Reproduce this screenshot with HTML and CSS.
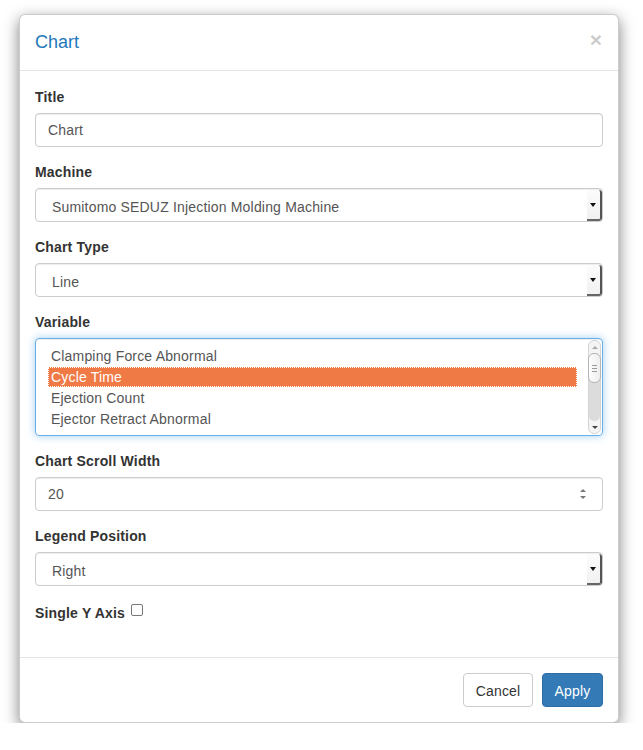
FILE: index.html
```html
<!DOCTYPE html>
<html>
<head>
<meta charset="utf-8">
<link rel="stylesheet" href="styles.css">
</head>
<body>
<div class="modal">
  <div class="modal-header">
    <h4 class="modal-title">Chart</h4>
    <span class="close">×</span>
  </div>
  <div class="modal-body">
    <div class="form-group">
      <label class="lbl">Title</label>
      <div class="control input">Chart</div>
    </div>
    <div class="form-group">
      <label class="lbl">Machine</label>
      <div class="control select"><span class="sel-text">Sumitomo SEDUZ Injection Molding Machine</span><span class="sel-btn"><span class="tri"></span></span></div>
    </div>
    <div class="form-group">
      <label class="lbl">Chart Type</label>
      <div class="control select"><span class="sel-text">Line</span><span class="sel-btn"><span class="tri"></span></span></div>
    </div>
    <div class="form-group">
      <label class="lbl">Variable</label>
      <div class="listbox">
        <div class="options">
          <div class="opt">Clamping Force Abnormal</div>
          <div class="opt selected">Cycle Time</div>
          <div class="opt">Ejection Count</div>
          <div class="opt">Ejector Retract Abnormal</div>
        </div>
        <div class="scrollbar">
          <div class="sb-arrow up"></div>
          <div class="sb-track">
            <div class="sb-thumb"><span></span><span></span><span></span></div>
          </div>
          <div class="sb-arrow down"></div>
        </div>
      </div>
    </div>
    <div class="form-group">
      <label class="lbl">Chart Scroll Width</label>
      <div class="control input number"><span>20</span><span class="spin"><span class="sp-up"></span><span class="sp-down"></span></span></div>
    </div>
    <div class="form-group">
      <label class="lbl">Legend Position</label>
      <div class="control select"><span class="sel-text">Right</span><span class="sel-btn"><span class="tri"></span></span></div>
    </div>
    <div class="form-group last">
      <label class="lbl inline">Single Y Axis</label><span class="checkbox"></span>
    </div>
  </div>
  <div class="modal-footer">
    <button class="btn btn-default">Cancel</button>
    <button class="btn btn-primary">Apply</button>
  </div>
</div>
</body>
</html>
```

FILE: styles.css
```css
html, body {
  margin: 0;
  padding: 0;
  background: #fff;
}
body {
  font-family: "Liberation Sans", Arial, sans-serif;
  font-size: 14px;
  line-height: 20px;
  color: #333;
}
.modal {
  width: 598px;
  margin: 14px 0 0 19px;
  border: 1px solid rgba(0,0,0,.2);
  border-radius: 6px;
  box-shadow: 0 5px 15px rgba(0,0,0,.5);
  background: #fff;
}
.modal-header {
  display: flex;
  justify-content: space-between;
  align-items: center;
  padding: 15px;
  border-bottom: 1px solid #e5e5e5;
}
.modal-title {
  margin: 0;
  font-size: 18px;
  line-height: 25px;
  font-weight: normal;
  color: #1f78b9;
}
.close {
  font-size: 21px;
  font-weight: bold;
  line-height: 1;
  color: #000;
  opacity: .2;
  margin-top: -6px;
  margin-right: 1px;
}
.modal-body {
  padding: 16px 15px 15px;
  letter-spacing: 0.18px;
}
.form-group {
  margin-bottom: 15px;
}
.form-group.last {
  margin-bottom: 19px;
  display: flex;
  align-items: center;
}
.lbl {
  display: block;
  font-weight: bold;
  margin-bottom: 6px;
  line-height: 20px;
}
.lbl.inline {
  display: inline-block;
  margin-bottom: 0;
  padding-top: 2px;
}
.control {
  box-sizing: border-box;
  height: 34px;
  border: 1px solid #ccc;
  border-radius: 4px;
  box-shadow: inset 0 1px 1px rgba(0,0,0,.075);
  color: #555;
  display: flex;
  align-items: center;
}
.input {
  padding: 0 12px;
}
.number {
  justify-content: space-between;
  padding-right: 16px;
}
.spin {
  display: flex;
  flex-direction: column;
  gap: 4px;
}
.sp-up, .sp-down {
  width: 0;
  height: 0;
  border-left: 3px solid transparent;
  border-right: 3px solid transparent;
}
.sp-up { border-bottom: 3px solid #777; }
.sp-down { border-top: 3px solid #777; }
.select {
  padding: 0 0 0 16px;
  justify-content: space-between;
  align-items: stretch;
}
.sel-text {
  display: flex;
  align-items: center;
  padding-top: 3px;
}
.sel-btn {
  width: 13px;
  margin: 1px 0 0 0;
  background: linear-gradient(#fcfcfc, #f1f1f1);
  border-right: 2px solid #555;
  border-bottom: 2px solid #666;
  border-radius: 0 3px 3px 0;
  display: flex;
  align-items: center;
  justify-content: center;
}
.tri {
  width: 0;
  height: 0;
  border-left: 3px solid transparent;
  border-right: 3px solid transparent;
  border-top: 4px solid #111;
  margin-right: 1px;
}
.listbox {
  box-sizing: border-box;
  height: 98px;
  border: 1px solid #66afe9;
  border-radius: 4px;
  box-shadow: inset 0 1px 1px rgba(0,0,0,.075), 0 0 8px rgba(102,175,233,.6);
  display: flex;
  justify-content: space-between;
  padding: 1px 1px 1px 12px;
  color: #555;
}
.options {
  width: 529px;
  padding-top: 6px;
}
.opt {
  line-height: 21px;
  height: 21px;
  padding-left: 3px;
}
.opt.selected {
  background: #f07a45;
  color: #fff;
  outline: 1px dotted #fff;
  outline-offset: -1px;
  height: 20px;
  line-height: 20px;
  margin-bottom: 1px;
}
.scrollbar {
  width: 13px;
  display: flex;
  flex-direction: column;
  background: #f4f4f4;
  border-radius: 6px;
  border: 1px solid #d4d4d4;
  box-sizing: border-box;
}
.sb-arrow {
  height: 12px;
  display: flex;
  align-items: center;
  justify-content: center;
}
.sb-arrow.up::after {
  content: "";
  border-left: 3px solid transparent;
  border-right: 3px solid transparent;
  border-bottom: 3px solid #aaa;
}
.sb-arrow.down::after {
  content: "";
  border-left: 3px solid transparent;
  border-right: 3px solid transparent;
  border-top: 3px solid #444;
}
.sb-track {
  flex: 1;
  background: #dcdcdc;
  border-radius: 5px;
  position: relative;
}
.sb-thumb {
  position: absolute;
  left: -1px;
  right: -1px;
  top: 0;
  height: 30px;
  box-sizing: border-box;
  border: 1px solid #b5b5b5;
  border-radius: 6px;
  background: linear-gradient(90deg, #fdfdfd, #eee);
  display: flex;
  flex-direction: column;
  align-items: center;
  justify-content: center;
  gap: 2px;
}
.sb-thumb span {
  width: 5px;
  height: 1px;
  background: #999;
}
.checkbox {
  display: inline-block;
  box-sizing: border-box;
  width: 12px;
  height: 12px;
  border: 1px solid #777;
  border-radius: 2px;
  margin-left: 6px;
  margin-top: -4px;
  background: #fff;
}
.modal-footer {
  border-top: 1px solid #e5e5e5;
  padding: 15px;
  display: flex;
  justify-content: flex-end;
  gap: 9px;
}
.btn {
  font-family: "Liberation Sans", Arial, sans-serif;
  font-size: 14px;
  line-height: 20px;
  height: 34px;
  padding: 7px 0 5px;
  border-radius: 4px;
  border: 1px solid #ccc;
  box-sizing: border-box;
  margin: 0;
  letter-spacing: 0.18px;
}
.btn-default {
  background: #fff;
  color: #333;
  width: 70px;
}
.btn-primary {
  background: #337ab7;
  border-color: #2e6da4;
  color: #fff;
  width: 61px;
}
```
